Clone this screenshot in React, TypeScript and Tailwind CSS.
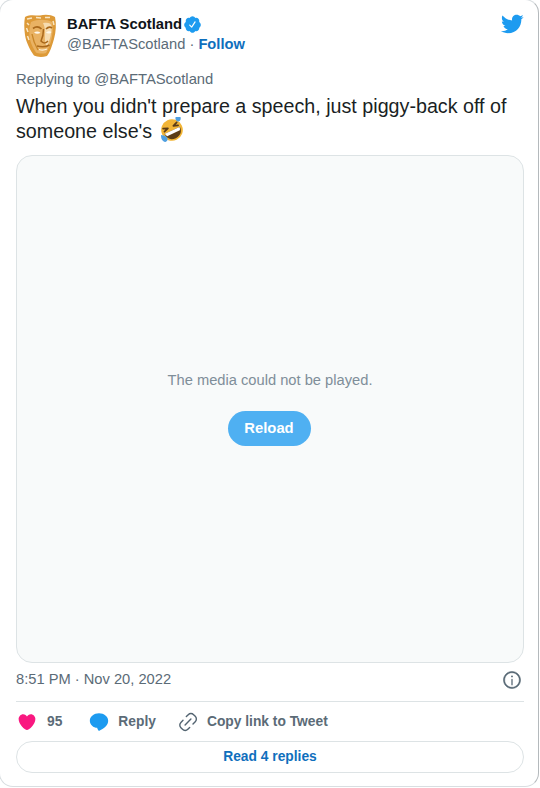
const font = "font-['Liberation_Sans',Arial,sans-serif]";

function Mask() {
  return (
    <svg width="34" height="44" viewBox="0 0 34 44" className="shrink-0">
      <path d="M2 3 C8 0 13 2 17 1.500 C22 0 28 .5 32 3 C33.500 10 33 18 31 25 C29 32 27 38 24 42 C19 43.500 14 43 11 41.500 C7 36 3 28 2 21 C1 14 1 8 2 3Z" fill="#dd9a38" />
      <path d="M8 8 C14 5 24 5 29 8 C30.500 14 29.500 22 28 27 C26.500 32 25 36 23 39 C19 40 15 39.500 13 38.500 C10 34 7 28 6.500 22 C6 17 6.500 12 8 8Z" fill="#e9b263" />
      <path d="M20 9 C25 8 28 9 28.500 12 C29 18 27 26 24 33 C22 30 21.500 24 22 18 C22 14 21 11 20 9Z" fill="#f6dcb0" />
      <path d="M4 5 L9 4 M13 3.500 L18 4 M22 3.500 L27 3.500 M4 9 L6 11 M30 7 L31 11 M3.500 14 L5 18 M4.500 22 L6 26" stroke="#f9e6c3" strokeWidth="1.500" fill="none" />
      <path d="M10 14.500 C13 12 16 12.500 18.500 15 M23 15 C25 13 27 12.500 29 14" stroke="#a9681b" strokeWidth="1.700" fill="none" />
      <path d="M11 18.500 C13 17 15.500 17 17.500 18.800 C15.500 20 13 20 11 18.500Z M23 18.800 C25 17 27 17 28.500 18 C27 20 25 20 23 18.800Z" fill="#fff8ea" />
      <path d="M20.500 15 C20.500 20 19.500 24 18 27 C20 29.500 23 29.500 25 27" stroke="#a9681b" strokeWidth="1.500" fill="none" />
      <path d="M14 32 C18 33 23 33 26.500 31" stroke="#a9681b" strokeWidth="1.700" fill="none" />
      <path d="M9 20 C10 26 12 31 15 36" stroke="#c98729" strokeWidth="1.400" fill="none" />
      <path d="M16 35.500 C19 36.500 22 36 24 35" stroke="#fff3da" strokeWidth="1.300" fill="none" />
    </svg>
  );
}

function Emoji() {
  return (
    <svg width="26" height="26" viewBox="0 0 26 26" className="inline-block align-[3px] ml-[1px] -my-2">
      <g transform="rotate(-25 13 13)">
        <circle cx="13" cy="13" r="10.800" fill="#f2b536" />
        <path d="M4.500 13.500 L21.500 13.500 C21.500 19 18 22 13 22 C8 22 4.500 19 4.500 13.500Z" fill="#5b3c16" />
        <path d="M5 13.500 L21 13.500 C21 15 20.500 16 20 16.500 L6 16.500 C5.500 16 5 15 5 13.500Z" fill="#fff" />
        <path d="M5.500 8 L10 9.800 L5.500 11.300 M20.500 8 L16 9.800 L20.500 11.300" stroke="#5b3c16" strokeWidth="1.700" fill="none" strokeLinejoin="round" strokeLinecap="round" />
        <path d="M1 13 C-1 16 -.5 20 2 21 C4.500 21.500 6 19 5 17 C4 15 2.500 14 1 13Z" fill="#4f9fe0" />
        <path d="M25 13 C27 16 26.500 20 24 21 C21.500 21.500 20 19 21 17 C22 15 23.500 14 25 13Z" fill="#4f9fe0" transform="translate(0 -13)" />
      </g>
    </svg>
  );
}

export default function App() {
  return (
    <div className={`w-[540px] h-[788px] bg-white overflow-hidden ${font}`}>
      <div className="w-[540px] h-[788px] -mt-[1px] -ml-[1px] border border-[#d9dee1] border-r-[#b4b9bc] rounded-[14px] bg-white pl-[16px] pr-[15px] flex flex-col text-[#0f1419]">
        <div className="flex items-start h-[66px] pt-[14px]">
          <div className="ml-[7px] w-[34px]"><Mask /></div>
          <div className="ml-[10px] flex flex-col">
            <div className="flex items-center h-[19px] mt-[1px] text-[14.8px] font-bold leading-[19px]">
              BAFTA Scotland
              <svg viewBox="0 0 24 24" width="19" height="19" className="ml-[1px]" fill="#1d9bf0"><path d="M22.5 12.5c0-1.58-.875-2.95-2.148-3.6.154-.435.238-.905.238-1.4 0-2.21-1.71-3.998-3.818-3.998-.47 0-.92.084-1.336.25C14.818 2.415 13.51 1.5 12 1.5s-2.816.917-3.437 2.25c-.415-.165-.866-.25-1.336-.25-2.11 0-3.818 1.79-3.818 4 0 .494.083.964.237 1.4-1.272.65-2.147 2.018-2.147 3.6 0 1.495.782 2.798 1.942 3.486-.02.17-.032.34-.032.514 0 2.21 1.708 4 3.818 4 .47 0 .92-.086 1.335-.25.62 1.334 1.926 2.25 3.437 2.25 1.512 0 2.818-.916 3.437-2.25.415.163.865.248 1.336.248 2.11 0 3.818-1.79 3.818-4 0-.174-.012-.344-.033-.513 1.158-.687 1.943-1.99 1.943-3.484zm-6.616-3.334l-4.334 6.5c-.145.217-.382.334-.625.334-.143 0-.288-.04-.416-.126l-.115-.094-2.415-2.415c-.293-.293-.293-.768 0-1.06s.768-.294 1.06 0l1.77 1.767 3.825-5.74c.23-.345.696-.436 1.04-.207.346.23.44.696.21 1.04z" /></svg>
            </div>
            <div className="h-[19px] mt-[1px] text-[14.7px] leading-[19px] text-[#5b6b77]">
              @BAFTAScotland · <span className="font-bold text-[#0f6fbd]">Follow</span>
            </div>
          </div>
          <svg viewBox="0 0 24 24" width="24" height="24" fill="#1d9bf0" className="ml-auto mt-[-2px] mr-[-1px]"><path d="M23.643 4.937c-.835.37-1.732.62-2.675.733.962-.576 1.7-1.49 2.048-2.578-.9.534-1.897.922-2.958 1.13-.85-.904-2.06-1.47-3.4-1.47-2.572 0-4.658 2.086-4.658 4.66 0 .364.042.718.12 1.06-3.873-.195-7.304-2.05-9.602-4.868-.4.69-.63 1.49-.63 2.342 0 1.616.823 3.043 2.072 3.878-.764-.025-1.482-.234-2.11-.583v.06c0 2.257 1.605 4.14 3.737 4.568-.392.106-.803.162-1.227.162-.3 0-.593-.028-.877-.082.593 1.85 2.313 3.198 4.352 3.234-1.595 1.25-3.604 1.995-5.786 1.995-.376 0-.747-.022-1.112-.065 2.062 1.323 4.51 2.093 7.14 2.093 8.57 0 13.255-7.098 13.255-13.254 0-.2-.005-.402-.014-.602.91-.658 1.7-1.477 2.323-2.41z" /></svg>
        </div>
        <div className="h-[19px] mt-[4px] text-[14.8px] leading-[19px] text-[#5b6b77]">Replying to @BAFTAScotland</div>
        <div className="mt-[5px] text-[19.7px] leading-[25px] w-[510px] text-[#1a1f24]">
          When you didn't prepare a speech, just piggy-back off of someone else's <Emoji />
        </div>
        <div className="mt-[11px] w-[508px] h-[508px] shrink-0 rounded-[16px] border border-[#dde3e5] bg-[#f8fafa] flex flex-col items-center pt-[214px]">
          <div className="text-[14.7px] leading-[20px] text-[#7f8e99]">The media could not be played.</div>
          <div className="mt-[21px] mr-[2px] w-[83px] h-[35px] rounded-full bg-[#4fb0f2] text-white text-[14.8px] font-bold flex items-center justify-center">Reload</div>
        </div>
        <div className="flex items-center justify-between h-[20px] mt-[6px] w-[508px] text-[14.7px] text-[#5b6b77]">
          <span>8:51 PM · Nov 20, 2022</span>
          <svg viewBox="0 0 24 24" width="20" height="20" fill="#536471" className="mt-[2px] mr-[2px]"><path d="M12 18.500c.414 0 .75-.336.75-.75v-6.500c0-.414-.336-.75-.75-.75s-.75.336-.75.750v6.500c0 .414.336.750.750.750zM12 8.750a1.100 1.100 0 1 0 0-2.200 1.100 1.100 0 0 0 0 2.200z" /><path d="M12 1.750C6.340 1.750 1.750 6.340 1.750 12S6.340 22.250 12 22.250 22.250 17.660 22.250 12 17.660 1.750 12 1.750zm0 19C7.170 20.750 3.250 16.830 3.250 12S7.170 3.250 12 3.250 20.750 7.170 20.750 12 16.830 20.750 12 20.750z" stroke="#536471" strokeWidth=".6" /></svg>
        </div>
        <div className="mt-[12px] h-px w-[508px] bg-[#dde3e5]" />
        <div className="flex items-center h-[39px] pt-[2px] w-[508px] text-[13.8px] font-bold text-[#5b6b77]">
          <svg viewBox="0 0 24 24" width="20" height="20" fill="#f91880" className="ml-[1px] -mt-[2px]"><path d="M12 21.638h-.014C9.403 21.590 1.950 14.856 1.950 8.478c0-3.064 2.525-5.754 5.403-5.754 2.290 0 3.830 1.580 4.646 2.730.814-1.148 2.354-2.730 4.645-2.730 2.880 0 5.404 2.690 5.404 5.755 0 6.376-7.454 13.110-10.037 13.157H12z" /></svg>
          <span className="ml-[10px]">95</span>
          <svg viewBox="0 0 24 24" width="22" height="22" fill="#1d9bf0" className="ml-[26px] -mt-[2px]"><path d="M12 2.500c-5.500 0-10 3.600-10 8 0 4.400 4 7.600 8 7.900 .3 1.300 1 2.600 1.900 3.300 2.300-1.300 5.500-2.700 7.600-5.200 1.600-1.600 2.500-3.700 2.500-6 0-4.400-4.500-8-10-8z" /></svg>
          <span className="ml-[8px]">Reply</span>
          <svg viewBox="0 0 24 24" width="20" height="20" fill="none" stroke="#536471" strokeWidth="1.700" strokeLinecap="round" className="ml-[22px] -mt-[2px]"><path d="M10 5.500l2.300-2.300a4.500 4.500 0 0 1 6.400 0l2 2a4.500 4.500 0 0 1 0 6.400L18 14.300M6 10l-2.500 2.500a4.500 4.500 0 0 0 0 6.400l1.900 1.900a4.500 4.500 0 0 0 6.400 0L14 18.600M8.500 15.500l7-7" /></svg>
          <span className="ml-[9px]">Copy link to Tweet</span>
        </div>
        <div className="h-[32px] w-[508px] rounded-full border border-[#dde3e5] flex items-center justify-center text-[13.8px] font-bold text-[#0f6fbd]">Read 4 replies</div>
      </div>
    </div>
  );
}
